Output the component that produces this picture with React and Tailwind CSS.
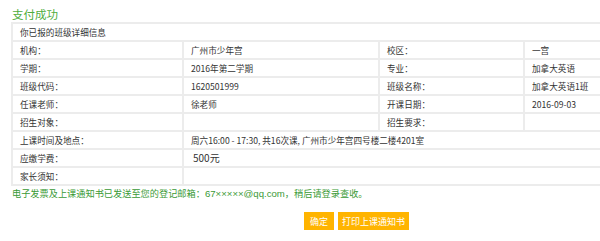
export default function App() {
  const font = { fontFamily: '"Noto Sans CJK SC", "Liberation Sans", sans-serif' };
  const latin = { fontFamily: '"Liberation Sans", "Noto Sans CJK SC", sans-serif' };
  const cell = "border-2 border-[#ececec] h-[18px] p-0 pl-[7px] align-middle leading-none";
  const rows = [
    ["机构：", "广州市少年宫", "校区：", "一宫"],
    ["学期：", "2016年第二学期", "专业：", "加拿大英语"],
    ["班级代码：", "1620501999", "班级名称：", "加拿大英语1班"],
    ["任课老师：", "徐老师", "开课日期：", "2016-09-03"],
    ["招生对象：", "", "招生要求：", ""],
  ];
  return (
    <div className="w-[600px] h-[241px] overflow-hidden bg-white text-[#333]" style={font}>
      <div className="pl-[12px] pt-[7px] text-[11.5px] leading-[15px] text-[#4fad3d]">支付成功</div>
      <div className="pl-[11px]">
        <table className="w-[620px] border-collapse text-[8.6px] table-fixed">
          <colgroup>
            <col className="w-[171px]" />
            <col className="w-[196px]" />
            <col className="w-[145px]" />
            <col />
          </colgroup>
          <tbody>
            <tr>
              <td colSpan={4} className={cell}>你已报的班级详细信息</td>
            </tr>
            {rows.map((r, i) => (
              <tr key={i}>
                {r.map((c, j) => (
                  <td key={j} className={cell}>{c}</td>
                ))}
              </tr>
            ))}
            <tr>
              <td className={cell}>上课时间及地点：</td>
              <td colSpan={3} className={cell}>周六16:00 - 17:30, 共16次课, 广州市少年宫四号楼二楼4201室</td>
            </tr>
            <tr>
              <td className={cell}>应缴学费：</td>
              <td colSpan={3} className={cell + " text-[10px]"}><span className="pl-[2px]">500元</span></td>
            </tr>
            <tr>
              <td className={cell}>家长须知：</td>
              <td colSpan={3} className={cell}></td>
            </tr>
          </tbody>
        </table>
      </div>
      <div className="pl-[12px] pt-[0px] text-[9.2px] leading-[14px] text-[#3a9a36] whitespace-nowrap">
        电子发票及上课通知书已发送至您的登记邮箱：<span style={latin} className="text-[9.6px]">67×××××@qq.com</span>，稍后请登录查收。
      </div>
      <div className="flex gap-[4px] pt-[11px] pl-[304px]">
        <button className="bg-[#ffb400] text-white text-[9px] h-[18px] w-[30px] leading-none">确定</button>
        <button className="bg-[#ffb400] text-white text-[9px] h-[18px] w-[71px] leading-none">打印上课通知书</button>
      </div>
    </div>
  );
}
